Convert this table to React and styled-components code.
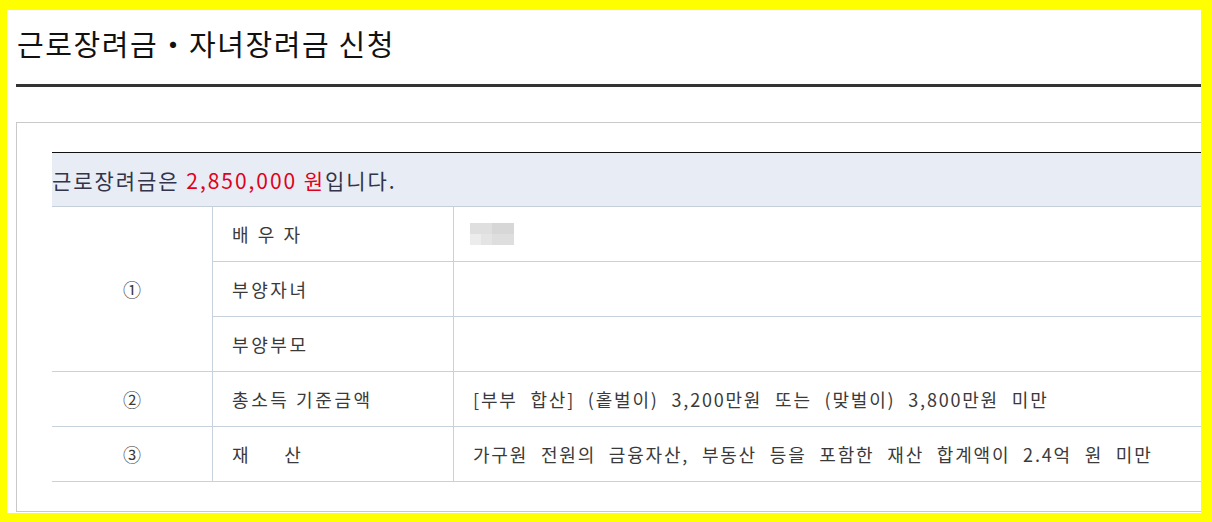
import React from "react";
import styled, { createGlobalStyle } from "styled-components";

const GlobalStyle = createGlobalStyle`
  html, body {
    margin: 0;
    padding: 0;
    background: #ffffff;
  }
  body {
    font-family: "Noto Sans CJK KR", "Noto Sans", sans-serif;
  }
`;

const SFrame = styled.div`
  width: 1212px;
  height: 522px;
  box-sizing: border-box;
  border-style: solid;
  border-color: #ffff00;
  border-width: 10px 11px 9px 7px;
  background: #ffffff;
  overflow: hidden;
`;

const SPage = styled.div`
  width: 1240px;
  padding-left: 9px;
`;

const STitle = styled.h2`
  margin: 0;
  padding: 12px 0 20px 1px;
  line-height: 42px;
  font-size: 29px;
  font-weight: 400;
  letter-spacing: 1.6px;
  color: #111111;
  border-bottom: 3px solid #333333;
`;

const SBox = styled.div`
  margin-top: 35px;
  border: 1px solid #c9c9c9;
  padding: 29px 0 29px 35px;
`;

const STable = styled.table`
  width: 100%;
  border-collapse: collapse;
  border-top: 1px solid #111111;
  font-size: 18px;
  color: #3a3a3a;
`;

const SHeadCell = styled.th`
  height: 53px;
  padding: 0;
  text-align: left;
  font-weight: 400;
  font-size: 21px;
  letter-spacing: 1.95px;
  color: #33334a;
  background: #e8edf5;
  border-bottom: 1px solid #c5cfda;
`;

const SAmount = styled.span`
  color: #e0001b;
`;

const SRow = styled.tr`
  height: 55px;
`;

const SCell = styled.td`
  padding: 0 0 0 19px;
  border-bottom: 1px solid #c8d2dc;
  border-left: 1px solid #c8d2dc;
  vertical-align: middle;
  white-space: nowrap;
`;

const SMarkCell = styled(SCell)`
  width: 160px;
  padding: 0;
  text-align: center;
  border-left: none;
`;

const SLabelCell = styled(SCell)`
  width: 221px;
  letter-spacing: 2.6px;
`;

const SValueCell = styled(SCell)`
  letter-spacing: 1.8px;
  word-spacing: 7px;
`;

const SMosaic = styled.svg`
  display: block;
  margin-left: -3px;
`;

const Mosaic = () => (
  <SMosaic width="44" height="22" viewBox="0 0 44 22">
    <rect x="0" y="0" width="22" height="11" fill="#dfdfdf" />
    <rect x="22" y="0" width="22" height="11" fill="#d7d7d7" />
    <rect x="0" y="11" width="11" height="11" fill="#ececec" />
    <rect x="11" y="11" width="11" height="11" fill="#e4e4e4" />
    <rect x="22" y="11" width="22" height="11" fill="#dedede" />
  </SMosaic>
);

const rows = [
  { mark: "①", span: 3, label: "배 우 자", value: <Mosaic /> },
  { label: "부양자녀", value: "" },
  { label: "부양부모", value: "" },
  {
    mark: "②",
    span: 1,
    label: "총소득 기준금액",
    value: "[부부 합산] (홑벌이) 3,200만원 또는 (맞벌이) 3,800만원 미만",
  },
  {
    mark: "③",
    span: 1,
    label: "재\u00a0\u00a0\u00a0\u00a0\u00a0산",
    value: "가구원 전원의 금융자산, 부동산 등을 포함한 재산 합계액이 2.4억 원 미만",
  },
];

export default function App() {
  return (
    <>
      <GlobalStyle />
      <SFrame>
        <SPage>
          <STitle>근로장려금・자녀장려금 신청</STitle>
          <SBox>
            <STable>
              <thead>
                <tr>
                  <SHeadCell colSpan={3}>
                    근로장려금은 <SAmount>2,850,000 원</SAmount>입니다.
                  </SHeadCell>
                </tr>
              </thead>
              <tbody>
                {rows.map((row, i) => (
                  <SRow key={i}>
                    {row.mark && (
                      <SMarkCell rowSpan={row.span}>{row.mark}</SMarkCell>
                    )}
                    <SLabelCell>{row.label}</SLabelCell>
                    <SValueCell>{row.value}</SValueCell>
                  </SRow>
                ))}
              </tbody>
            </STable>
          </SBox>
        </SPage>
      </SFrame>
    </>
  );
}
